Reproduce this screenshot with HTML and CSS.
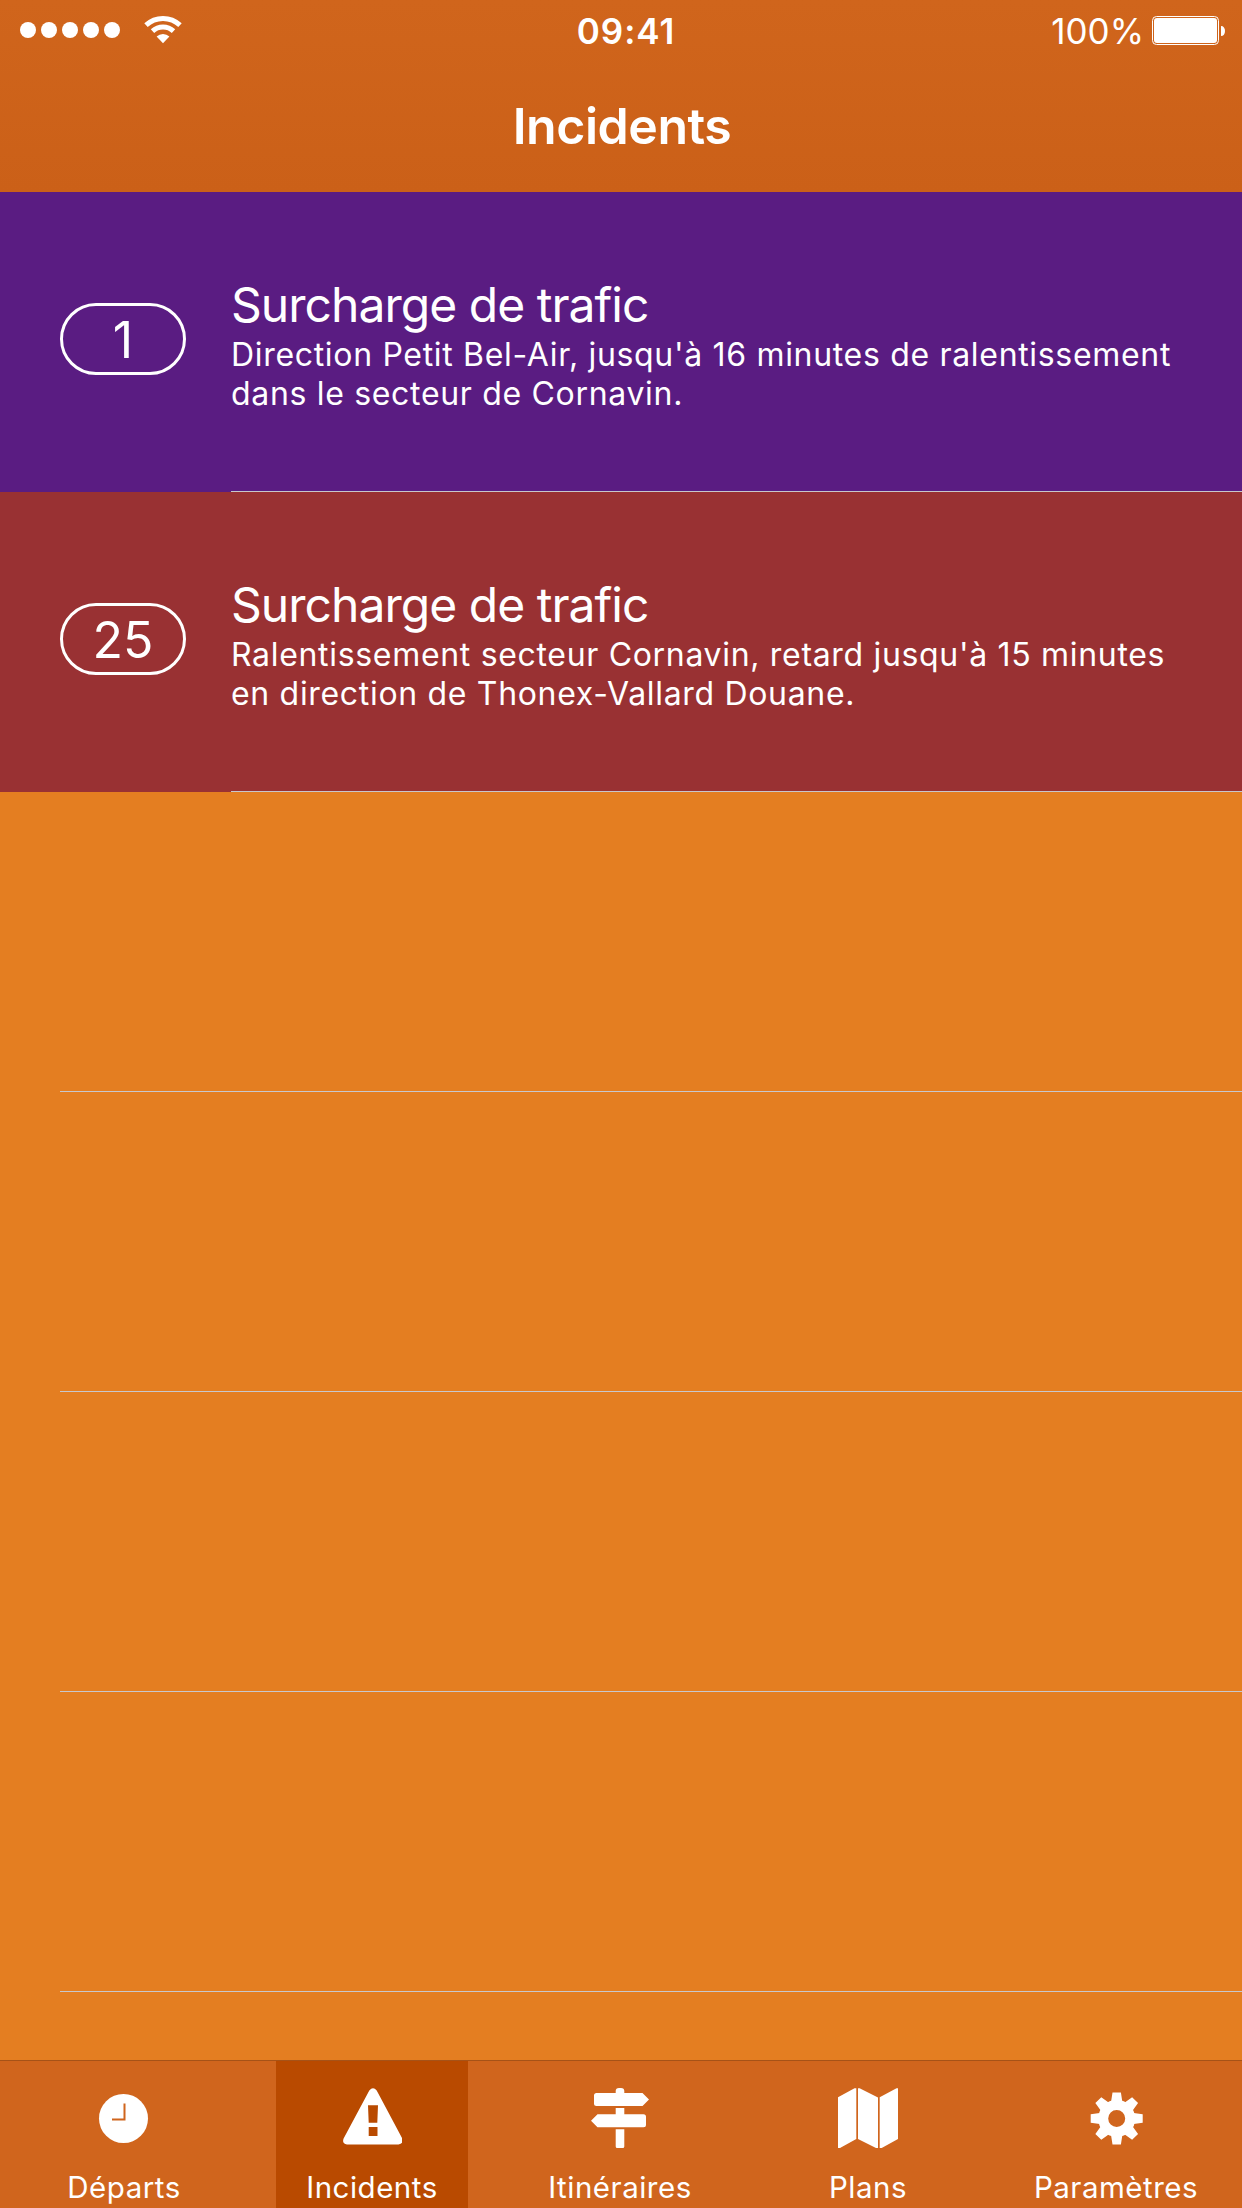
FILE: index.html
```html
<!DOCTYPE html>
<html lang="fr">
<head>
<meta charset="utf-8">
<title>Incidents</title>
<link rel="stylesheet" href="styles.css">
</head>
<body>
<div class="app">
  <header class="top">
    <div class="status">
      <div class="signal">
        <i class="dot"></i><i class="dot"></i><i class="dot"></i><i class="dot"></i><i class="dot"></i>
        <svg class="wifi" viewBox="0 0 38 28" width="38" height="28"><g fill="none" stroke="#fff" stroke-width="5"><path d="M2 9.2A25 25 0 0 1 36 9.2"/><path d="M8.5 15.2A15.500 15.500 0 0 1 29.500 15.200"/></g><path fill="#fff" d="M12.600 20.600A9.300 9.300 0 0 1 25.400 20.600L19 27.200Z"/></svg>
      </div>
      <span class="time">09:41</span>
      <div class="power">
        <span class="percent">100%</span>
        <svg class="battery" viewBox="0 0 74 29" width="74" height="29"><rect x=".5" y=".5" width="66" height="28" rx="4" fill="none" stroke="#fff"/><rect x="2" y="2" width="63" height="25" rx="3" fill="#fff"/><path fill="#fff" d="M69 10c2.500 0 4 2 4 5s-1.500 5-4 5z"/></svg>
      </div>
    </div>
    <h1 class="title">Incidents</h1>
  </header>
  <main class="list">
    <article class="row purple">
      <span class="badge">1</span>
      <div class="body">
        <h2 class="name">Surcharge de trafic</h2>
        <p class="desc">Direction Petit Bel-Air, jusqu'à 16 minutes de ralentissement<br>dans le secteur de Cornavin.</p>
      </div>
    </article>
    <article class="row red">
      <span class="badge">25</span>
      <div class="body">
        <h2 class="name">Surcharge de trafic</h2>
        <p class="desc">Ralentissement secteur Cornavin, retard jusqu'à 15 minutes<br>en direction de Thonex-Vallard Douane.</p>
      </div>
    </article>
    <div class="row empty"></div>
    <div class="row empty"></div>
    <div class="row empty"></div>
    <div class="row empty"></div>
  </main>
  <nav class="tabs">
    <a class="tab"><svg class="icon" viewBox="0 0 60 60"><circle cx="29.500" cy="30.500" r="24.500" fill="#fff"/><path d="M30.500 15.500V31.500H18" fill="none" stroke="#d0651d" stroke-width="2"/></svg><span class="label">Départs</span></a>
    <a class="tab active"><svg class="icon" viewBox="-1 0 60 60"><path fill="#fff" fill-rule="evenodd" d="M26.300 2.600Q30-2.200 33.700 2.600L59.200 50.500Q60.800 56 55.500 56.400H4Q-1.300 56 .6 50.500ZM25 17.300L25.700 34.700H34.300L35 17.300ZM25.700 39V48H34.500V39Z"/></svg><span class="label">Incidents</span></a>
    <a class="tab"><svg class="icon" viewBox="0 0 60 60"><path fill="#fff" d="M25.700 5V3Q25.700 0 29 0H31Q34.300 0 34.300 3V5H52.500L59 11.500L52.500 18H6.500Q4 18 4 15.500V7.500Q4 5 6.500 5ZM25.700 20H34.300V26.300H53.500Q56 26.300 56 28.800V36.800Q56 39.300 53.500 39.300H7.500L1 32.800L7.500 26.300H25.700ZM25.700 41.300H34.300V58.500Q34.300 60 32.800 60H27.200Q25.700 60 25.700 58.500Z"/></svg><span class="label">Itinéraires</span></a>
    <a class="tab"><svg class="icon" viewBox="0 0 60 60"><path fill="#fff" d="M0 9.300L16.500 .3H18.300V51L2 60H0ZM20 .3H21.600L40 9.500V60H38L20 51ZM41.700 9.300L58.500 .3H60V51L43.700 60H41.700Z"/></svg><span class="label">Plans</span></a>
    <a class="tab"><svg class="icon" viewBox="-.7 0 60 60"><g fill="#fff"><path id="tooth" d="M25.800 4.500H34.200L35.600 13.500L38 20H22L24.400 13.500Z"/><use href="#tooth" transform="rotate(45 30 30.500)"/><use href="#tooth" transform="rotate(90 30 30.500)"/><use href="#tooth" transform="rotate(135 30 30.500)"/><use href="#tooth" transform="rotate(180 30 30.500)"/><use href="#tooth" transform="rotate(225 30 30.500)"/><use href="#tooth" transform="rotate(270 30 30.500)"/><use href="#tooth" transform="rotate(315 30 30.500)"/></g><circle cx="30" cy="30.500" r="13.500" fill="none" stroke="#fff" stroke-width="10"/></svg><span class="label">Paramètres</span></a>
  </nav>
</div>
</body>
</html>
```
FILE: styles.css
```css
* { box-sizing: border-box; margin: 0; padding: 0; }

body {
  font-family: Inter, "Liberation Sans", sans-serif;
  color: #fff;
  background: #e47e21;
}

.app {
  display: flex;
  flex-direction: column;
  height: 2208px;
  overflow: hidden;
}

.top {
  flex: none;
  height: 192px;
  background: linear-gradient(#d0651c, #cb6018);
}

.status {
  display: grid;
  grid-template-columns: 1fr auto 1fr;
  height: 60px;
  padding: 0 16px 0 20px;
}

.signal { display: flex; gap: 5px; padding-top: 22px; }
.dot { width: 16px; height: 16px; border-radius: 50%; background: #fff; }
.wifi { margin: -6px 0 0 19px; }

.time, .percent { font-size: 35px; line-height: 62px; }
.time { margin-left: 6px; font-weight: 600; letter-spacing: 1px; }
.power { display: flex; justify-content: flex-end; gap: 8px; }
.battery { margin-top: 16px; }

.title {
  padding: 36px 0 0 2px;
  font-size: 50px;
  font-weight: 600;
  line-height: 60px;
  letter-spacing: -.45px;
  text-align: center;
}

.list { flex: 1; min-height: 0; overflow: hidden; }

.row { display: flex; height: 300px; }
.purple { background: #5a1c82; }
.red { background: #993133; }

.badge {
  flex: none;
  width: 126px;
  height: 72px;
  margin: 111px 45px 0 60px;
  border: 3px solid #fff;
  border-radius: 36px;
  font-size: 50px;
  line-height: 68px;
  text-align: center;
}

.body {
  flex: 1;
  padding-top: 83px;
  border-bottom: 1px solid #c8c7cc;
}

.name { font-size: 48px; font-weight: 400; line-height: 60px; letter-spacing: -.97px; }
.desc { font-size: 32px; line-height: 39px; letter-spacing: .68px; white-space: nowrap; }

.empty { margin-left: 60px; border-bottom: 1px solid #c8c7cc; }

.tabs {
  flex: none;
  display: grid;
  grid-template-columns: repeat(5, 248px);
  justify-items: center;
  height: 148px;
  border-top: 1px solid #a65217;
  background: #d0651d;
}

.tab {
  display: flex;
  flex-direction: column;
  align-items: center;
  gap: 21px;
  width: 192px;
  padding-top: 27px;
}

.active { background: #b94a00; }
.icon { width: 60px; height: 60px; }
.label { font-size: 29.5px; line-height: 36px; letter-spacing: .5px; }
```
